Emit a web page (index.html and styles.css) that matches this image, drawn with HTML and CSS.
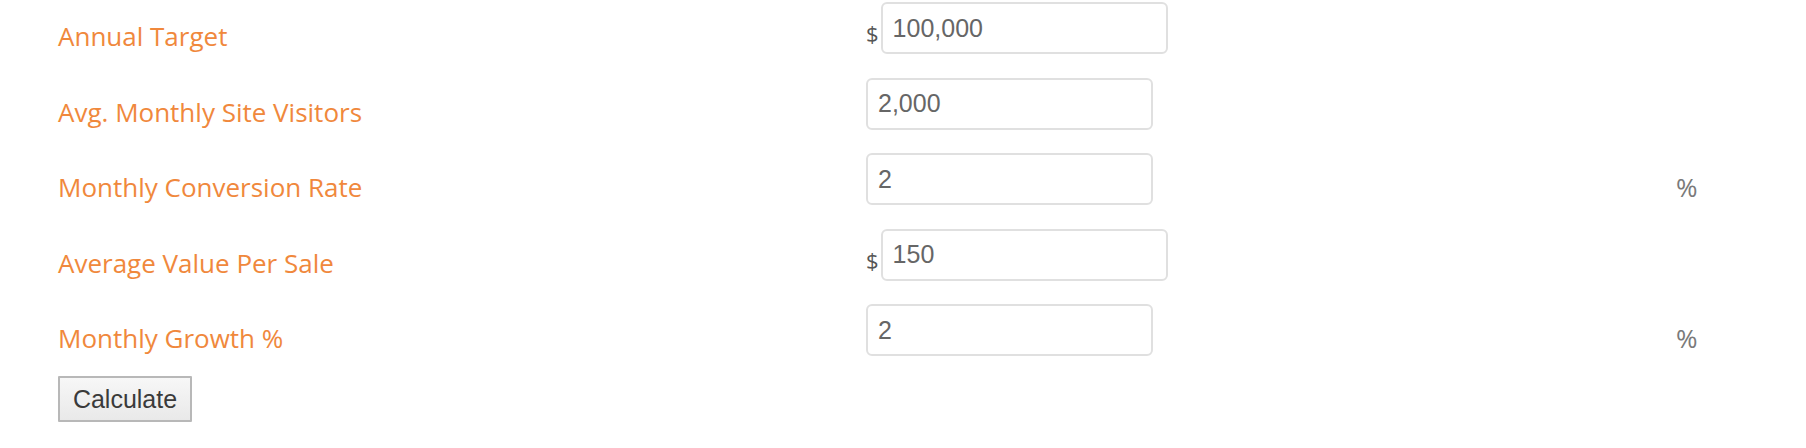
FILE: index.html
```html
<!DOCTYPE html>
<html>
<head>
<meta charset="utf-8">
<link rel="stylesheet" href="styles.css">
</head>
<body>
<form class="calc">
  <div class="rows">
    <div class="row">
      <label class="label">Annual Target</label>
      <div class="field"><span class="cur">$</span><input class="inp" type="text" value="100,000"></div>
      <span class="unit"></span>
    </div>
    <div class="row">
      <label class="label">Avg. Monthly Site Visitors</label>
      <div class="field"><input class="inp" type="text" value="2,000"></div>
      <span class="unit"></span>
    </div>
    <div class="row">
      <label class="label">Monthly Conversion Rate</label>
      <div class="field"><input class="inp" type="text" value="2"></div>
      <span class="unit">%</span>
    </div>
    <div class="row">
      <label class="label">Average Value Per Sale</label>
      <div class="field"><span class="cur">$</span><input class="inp" type="text" value="150"></div>
      <span class="unit"></span>
    </div>
    <div class="row">
      <label class="label">Monthly Growth %</label>
      <div class="field"><input class="inp" type="text" value="2"></div>
      <span class="unit">%</span>
    </div>
  </div>
  <button class="btn" type="button">Calculate</button>
</form>
</body>
</html>
```

FILE: styles.css
```css
html, body {
  margin: 0;
  padding: 0;
  background: #ffffff;
}

.calc {
  padding: 2px 0 0 58px;
}

.rows {
  display: grid;
  row-gap: 3.5px;
}

.row {
  display: grid;
  grid-template-columns: 808px 810px auto;
  height: 72px;
  align-items: start;
}

.label {
  font-family: "Open Sans", sans-serif;
  font-size: 26px;
  line-height: 36px;
  margin-top: 16px;
  color: #f0883c;
  white-space: nowrap;
}

.field {
  display: flex;
  align-items: flex-start;
}

.cur {
  font-family: "Open Sans", sans-serif;
  font-size: 22px;
  line-height: 22px;
  margin-top: 20px;
  margin-right: 2px;
  color: #555555;
}

.inp {
  box-sizing: border-box;
  width: 287px;
  height: 52px;
  margin: 0;
  padding: 0 10px;
  border: 2px solid #e0e0e0;
  border-radius: 6px;
  background: #ffffff;
  font-family: "Liberation Sans", Arial, sans-serif;
  font-size: 25px;
  color: #666666;
  outline: none;
}

.unit {
  font-family: "Open Sans", sans-serif;
  font-size: 26px;
  line-height: 36px;
  margin-top: 16px;
  color: #7a7a7a;
}

.btn {
  box-sizing: border-box;
  width: 134px;
  height: 46px;
  margin: 0;
  padding: 0;
  border: 2px solid #b8b8b8;
  border-radius: 1px;
  background: linear-gradient(#f7f7f7, #e9e9e9);
  font-family: "Liberation Sans", Arial, sans-serif;
  font-size: 25px;
  color: #3a3a3a;
  text-align: center;
}
```
